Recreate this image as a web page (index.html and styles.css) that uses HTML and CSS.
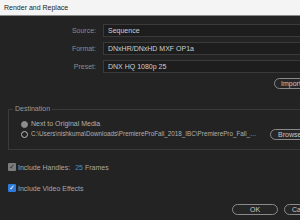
FILE: index.html
```
<!DOCTYPE html>
<html lang="en">
<head>
    <meta charset="UTF-8">
    <title>Render and Replace</title>
    <link rel="stylesheet" href="styles.css">
</head>
<body>
    <div class="title-bar">Render and Replace</div>

    <div class="dialog">
        <div class="fields">
            <label>Source:</label>
            <div class="field">Sequence</div>
            <label>Format:</label>
            <div class="field">DNxHR/DNxHD MXF OP1a</div>
            <label>Preset:</label>
            <div class="field">DNX HQ 1080p 25</div>
        </div>

        <div class="import-row">
            <button class="pill">Import</button>
        </div>

        <div class="group">
            <div class="group-title">Destination</div>
            <div class="radio-row">
                <span class="radio checked"></span>
                <span class="radio-text">Next to Original Media</span>
            </div>
            <div class="radio-row">
                <span class="radio"></span>
                <span class="radio-text path">C:\Users\nishkuma\Downloads\PremiereProFall_2018_IBC\PremierePro_Fall_2018_IBC</span>
                <button class="pill browse">Browse</button>
            </div>
        </div>

        <div class="check-row">
            <span class="check grey">&#10003;</span>
            <span>Include Handles:</span>
            <span class="num">25</span>
            <span>Frames</span>
        </div>
        <div class="check-row">
            <span class="check blue">&#10003;</span>
            <span>Include Video Effects</span>
        </div>

        <div class="buttons">
            <button class="pill ok">OK</button>
            <button class="pill cancel">Cancel</button>
        </div>
    </div>
</body>
</html>
```

FILE: styles.css
```
html, body {
    margin: 0;
    padding: 0;
}

body {
    width: 300px;
    height: 220px;
    overflow: hidden;
    background-color: #232323;
    font-family: "Liberation Sans", Arial, sans-serif;
    font-size: 7px;
    color: #b4b4b4;
}

.title-bar {
    height: 15px;
    line-height: 15px;
    padding-left: 4px;
    background-color: #f4f4f4;
    color: #1e1e1e;
    font-size: 7px;
    border-bottom: 1px solid #8a8a8a;
}

.dialog {
    padding: 8px 0 0 8px;
}

.fields {
    display: grid;
    grid-template-columns: 88px 1fr;
    column-gap: 7px;
    row-gap: 5px;
    align-items: center;
}

.fields label {
    text-align: right;
    color: #8c8c8c;
}

.field {
    height: 11px;
    line-height: 11px;
    padding-left: 4px;
    margin-right: -10px;
    background-color: #1d1d1d;
    border: 1px solid #3a3a3a;
    color: #cfcfcf;
    white-space: nowrap;
}

.pill {
    box-sizing: border-box;
    height: 11px;
    padding: 0 6px;
    border: 1px solid #8a8a8a;
    border-radius: 6px;
    background: #262626;
    color: #c8c8c8;
    font-family: inherit;
    font-size: 7px;
    line-height: 9px;
    white-space: nowrap;
    overflow: hidden;
    flex-shrink: 0;
}

.import-row {
    display: flex;
    margin-top: 5px;
    padding-left: 266px;
}

.import-row .pill {
    width: 40px;
    text-align: left;
    padding-left: 6px;
}

.group {
    position: relative;
    margin-top: 20px;
    margin-right: -10px;
    border: 1px solid #3a3a3a;
    border-right: none;
    padding: 9px 0 9px 12px;
    height: 21px;
}

.group-title {
    position: absolute;
    top: -5px;
    left: 4px;
    padding: 0 2px;
    background-color: #232323;
    color: #9a9a9a;
}

.radio-row {
    display: flex;
    align-items: center;
    height: 10px;
    white-space: nowrap;
}

.radio {
    width: 5px;
    height: 5px;
    border: 1px solid #bdbdbd;
    border-radius: 50%;
    margin-right: 3px;
    flex-shrink: 0;
}

.radio.checked {
    background-color: #8e8e8e;
    border-color: #8e8e8e;
}

.radio-text {
    color: #b0b0b0;
    line-height: 10px;
}

.path {
    width: 232px;
    font-size: 6.3px;
    overflow: hidden;
    text-overflow: ellipsis;
}

.browse {
    margin-left: 11px;
    width: 40px;
    text-align: left;
    padding-left: 7px;
}

.check-row {
    display: flex;
    align-items: center;
    gap: 2px;
    height: 10px;
    margin-top: 12px;
    color: #a8a8a8;
}

.check-row + .check-row {
    margin-top: 11px;
}

.check {
    width: 8px;
    height: 8px;
    font-size: 7px;
    line-height: 8px;
    text-align: center;
    border-radius: 1px;
    color: #fff;
}

.check.grey {
    background-color: #7c7c7c;
    color: #2a2a2a;
}

.check.blue {
    background-color: #2d7ad8;
}

.num {
    color: #3f8ee8;
    margin-left: 3px;
}

.buttons {
    display: flex;
    gap: 6px;
    margin-top: 11px;
    padding-left: 224px;
}

.ok {
    width: 46px;
    text-align: center;
}

.cancel {
    width: 46px;
    text-align: left;
    padding-left: 7px;
}
```
